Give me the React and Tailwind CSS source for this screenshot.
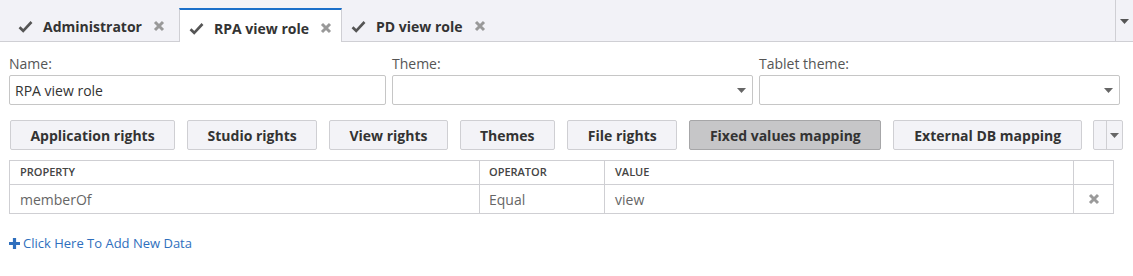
import React from "react";

const font = { fontFamily: '"Open Sans", "Noto Sans", sans-serif' };

function Check() {
  return (
    <svg width="15" height="13" viewBox="0 0 15 13" className="shrink-0">
      <path d="M1.5 7.2 L5.2 10.8 L13.5 2" fill="none" stroke="#555" strokeWidth="2.6" strokeLinecap="butt" />
    </svg>
  );
}

function XIcon({ color = "#999", size = 12 }) {
  return (
    <svg width={size} height={size} viewBox="0 0 12 12" className="shrink-0">
      <path d="M2 2 L10 10 M10 2 L2 10" stroke={color} strokeWidth="3" strokeLinecap="butt" />
    </svg>
  );
}

function Caret({ color = "#666" }) {
  return (
    <svg width="9" height="5" viewBox="0 0 9 5">
      <path d="M0 0 H9 L4.5 5 Z" fill={color} />
    </svg>
  );
}

function Tab({ label, active }) {
  return (
    <div
      className={
        "flex items-center w-full h-[34px] pt-[4px] pl-[9px] gap-[10px] whitespace-nowrap text-[14px] font-bold text-[#333] " +
        (active
          ? "bg-white border-t-2 border-t-[#1a6fc9] border-x border-x-[#cfcfd4] -mb-px relative"
          : "")
      }
    >
      <Check />
      <span className="mr-[1px]">{label}</span>
      <XIcon />
    </div>
  );
}

function Btn({ label, active, w }) {
  return (
    <div
      className={
        "h-[30px] flex items-center justify-center whitespace-nowrap rounded-[2px] border text-[14px] font-bold text-[#333] " +
        (active ? "bg-[#c6c6c8] border-[#a6a6a8]" : "bg-[#f3f3f7] border-[#cfcfd3]")
      }
      style={{ width: w }}
    >
      {label}
    </div>
  );
}

export default function App() {
  return (
    <div className="w-[1133px] h-[276px] bg-white" style={font}>
      {/* Tab bar */}
      <div className="h-[42px] bg-[#f2f2f7] border-b border-[#cfcfd4] flex items-end">
        <div className="flex items-end pl-[9px] flex-1">
          <div className="w-[170px] flex shrink-0"><Tab label="Administrator" /></div>
          <div className="w-[163px] flex shrink-0"><Tab label="RPA view role" active /></div>
          <div className="w-[160px] h-[34px] flex shrink-0">
            <Tab label="PD view role" />
          </div>
        </div>
        <div className="w-[18px] h-[42px] border-l border-[#cfcfd4] flex items-center justify-center -mb-px">
          <Caret color="#555" />
        </div>
      </div>

      {/* Form row */}
      <div className="flex px-[9px] pt-[12px] gap-[6px] text-[14px] text-[#555]">
        <div className="w-[377px]">
          <div className="h-[20px] leading-[20px]">Name:</div>
          <div className="mt-[1px] h-[30px] border border-[#c6c6c6] rounded-[2px] flex items-center px-[5px] text-[#333]">
            RPA view role
          </div>
        </div>
        <div className="w-[361px]">
          <div className="h-[20px] leading-[20px]">Theme:</div>
          <div className="mt-[1px] h-[30px] border border-[#c6c6c6] rounded-[2px] flex items-center justify-end pr-[6px]">
            <Caret />
          </div>
        </div>
        <div className="w-[361px]">
          <div className="h-[20px] leading-[20px]">Tablet theme:</div>
          <div className="mt-[1px] h-[30px] border border-[#c6c6c6] rounded-[2px] flex items-center justify-end pr-[6px]">
            <Caret />
          </div>
        </div>
      </div>

      {/* Buttons */}
      <div className="flex px-[10px] pt-[15px] gap-[12px]">
        <Btn label="Application rights" w={166} />
        <Btn label="Studio rights" w={131} />
        <Btn label="View rights" w={119} />
        <Btn label="Themes" w={96} />
        <Btn label="File rights" w={111} />
        <Btn label="Fixed values mapping" w={193} active />
        <Btn label="External DB mapping" w={190} />
        <div className="w-[30px] h-[30px] -ml-[1px] border border-[#cfcfd3] rounded-[2px] bg-[#f3f3f7] flex">
          <div className="w-[13px] border-r border-[#cfcfd3]" />
          <div className="flex-1 flex items-center justify-center">
            <Caret />
          </div>
        </div>
      </div>

      {/* Table */}
      <div className="px-[9px] pt-[10px]">
        <div className="w-[1105px] border border-[#cfcfd3]">
          <div className="flex h-[24px] border-b border-[#cfcfd3] text-[11px] font-semibold text-[#444]">
            <div className="w-[470px] border-r border-[#cfcfd3] pl-[10px] flex items-center">PROPERTY</div>
            <div className="w-[125px] border-r border-[#cfcfd3] pl-[9px] flex items-center">OPERATOR</div>
            <div className="w-[469px] border-r border-[#cfcfd3] pl-[10px] flex items-center">VALUE</div>
            <div className="flex-1" />
          </div>
          <div className="flex h-[28px] text-[14px] text-[#666]">
            <div className="w-[470px] border-r border-[#cfcfd3] pl-[10px] flex items-center">memberOf</div>
            <div className="w-[125px] border-r border-[#cfcfd3] pl-[9px] flex items-center">Equal</div>
            <div className="w-[469px] border-r border-[#cfcfd3] pl-[10px] flex items-center">view</div>
            <div className="flex-1 flex items-center justify-center">
              <XIcon color="#9a9a9a" size={12} />
            </div>
          </div>
        </div>
      </div>

      {/* Add link */}
      <div className="flex items-center gap-[3px] pl-[9px] pt-[20px] text-[13px] text-[#2f6fbd]">
        <svg width="11" height="11" viewBox="0 0 11 11">
          <path d="M5.5 0 V11 M0 5.5 H11" stroke="#2f6fbd" strokeWidth="3.2" />
        </svg>
        <span>Click Here To Add New Data</span>
      </div>
    </div>
  );
}
